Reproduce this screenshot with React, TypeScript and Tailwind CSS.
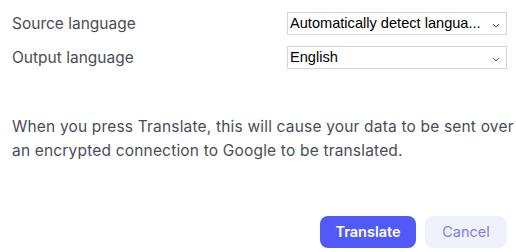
import React from 'react';

const Chevron = () => (
  <svg width="8" height="5" viewBox="0 0 8 5" className="mt-[4px] shrink-0">
    <path d="M1 1 L4 4 L7 1" fill="none" stroke="#555" strokeWidth="1" />
  </svg>
);

const FakeSelect = ({ value }: { value: string }) => (
  <div className="flex h-[23px] w-[220px] items-center justify-between border border-[#d4d4d4] bg-white pl-[2px] pr-[6px] text-[14.6px] text-black [font-family:'Liberation_Sans',Arial,sans-serif]">
    <span className="truncate whitespace-nowrap">{value}</span>
    <Chevron />
  </div>
);

export default function App() {
  return (
    <div className="flex h-[252px] w-[516px] flex-col bg-white pl-3 pr-[9px] pt-3 pb-1 text-[#4a4d55] [font-family:Inter,'Open_Sans',sans-serif]">
      {/* rows */}
      <div className="flex flex-col gap-[11px]">
        <div className="flex items-center justify-between">
          <span className="text-[15.5px]">Source language</span>
          <FakeSelect value="Automatically detect langua..." />
        </div>
        <div className="flex items-center justify-between">
          <span className="text-[15.5px]">Output language</span>
          <FakeSelect value="English" />
        </div>
      </div>

      <p className="mt-[45px] w-[502px] text-[15.5px] leading-6 tracking-[0.18px]">
        When you press Translate, this will cause your data to be sent over an encrypted connection to Google to be
        translated.
      </p>

      <div className="mt-auto flex justify-end gap-[9px]">
        <button className="h-[32px] w-[96px] rounded-lg bg-[#5159f6] text-[14.5px] font-semibold text-white">
          Translate
        </button>
        <button className="h-[32px] w-[82px] rounded-lg bg-[#eff2fa] text-[14.5px] text-[#7b7ff0]">Cancel</button>
      </div>
    </div>
  );
}
